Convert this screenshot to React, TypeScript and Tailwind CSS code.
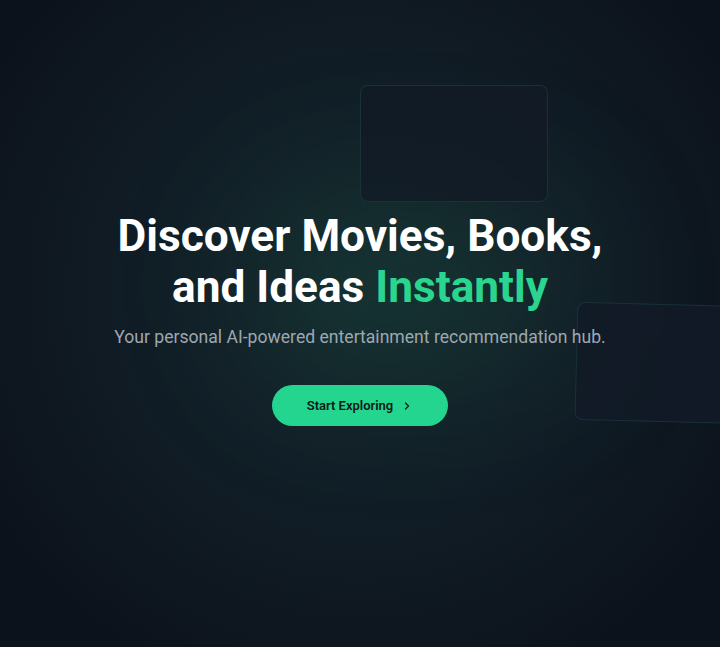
import { ChevronRight } from 'lucide-react';

export default function App() {
  return (
    <div className="relative h-[647px] w-[720px] overflow-hidden bg-[#0b1019] font-['Roboto',sans-serif]">
      {/* background glow */}
      <div className="pointer-events-none absolute inset-0 bg-[radial-gradient(ellipse_at_50%_45%,#14292d_0%,#111d26_45%,#0c121b_85%)]" />
      <div className="pointer-events-none absolute left-[260px] top-[200px] h-[170px] w-[320px] rounded-full bg-[#1f5a46]/25 blur-[70px]" />

      {/* floating panels */}
      <div className="absolute left-[360px] top-[85px] h-[117px] w-[188px] rounded-lg border border-[#1c3a40]/70 bg-[#111a25]/80" />
      <div className="absolute left-[576px] top-[304px] h-[118px] w-[170px] rotate-[1.5deg] rounded-lg border border-[#1c3a40]/70 bg-[#111a27]/80" />

      <div className="relative flex h-full flex-col items-center pt-[211px] text-center">
        <h1 className="text-[44.2px] font-bold leading-[51px] text-white">
          Discover Movies, Books,
          <br />
          and Ideas <span className="text-[#2ad58f]">Instantly</span>
        </h1>
        <p className="mt-[12px] text-[17.6px] leading-6 text-[#9ea7b2]">
          Your personal AI-powered entertainment recommendation hub.
        </p>
        <button
          type="button"
          className="mt-[36px] flex h-[41px] w-[176px] items-center justify-center gap-2 rounded-full bg-[#24d58f] text-[13px] font-semibold text-[#0d1a16]"
        >
          Start Exploring
          <ChevronRight size={12} strokeWidth={2.5} />
        </button>
      </div>
    </div>
  );
}
